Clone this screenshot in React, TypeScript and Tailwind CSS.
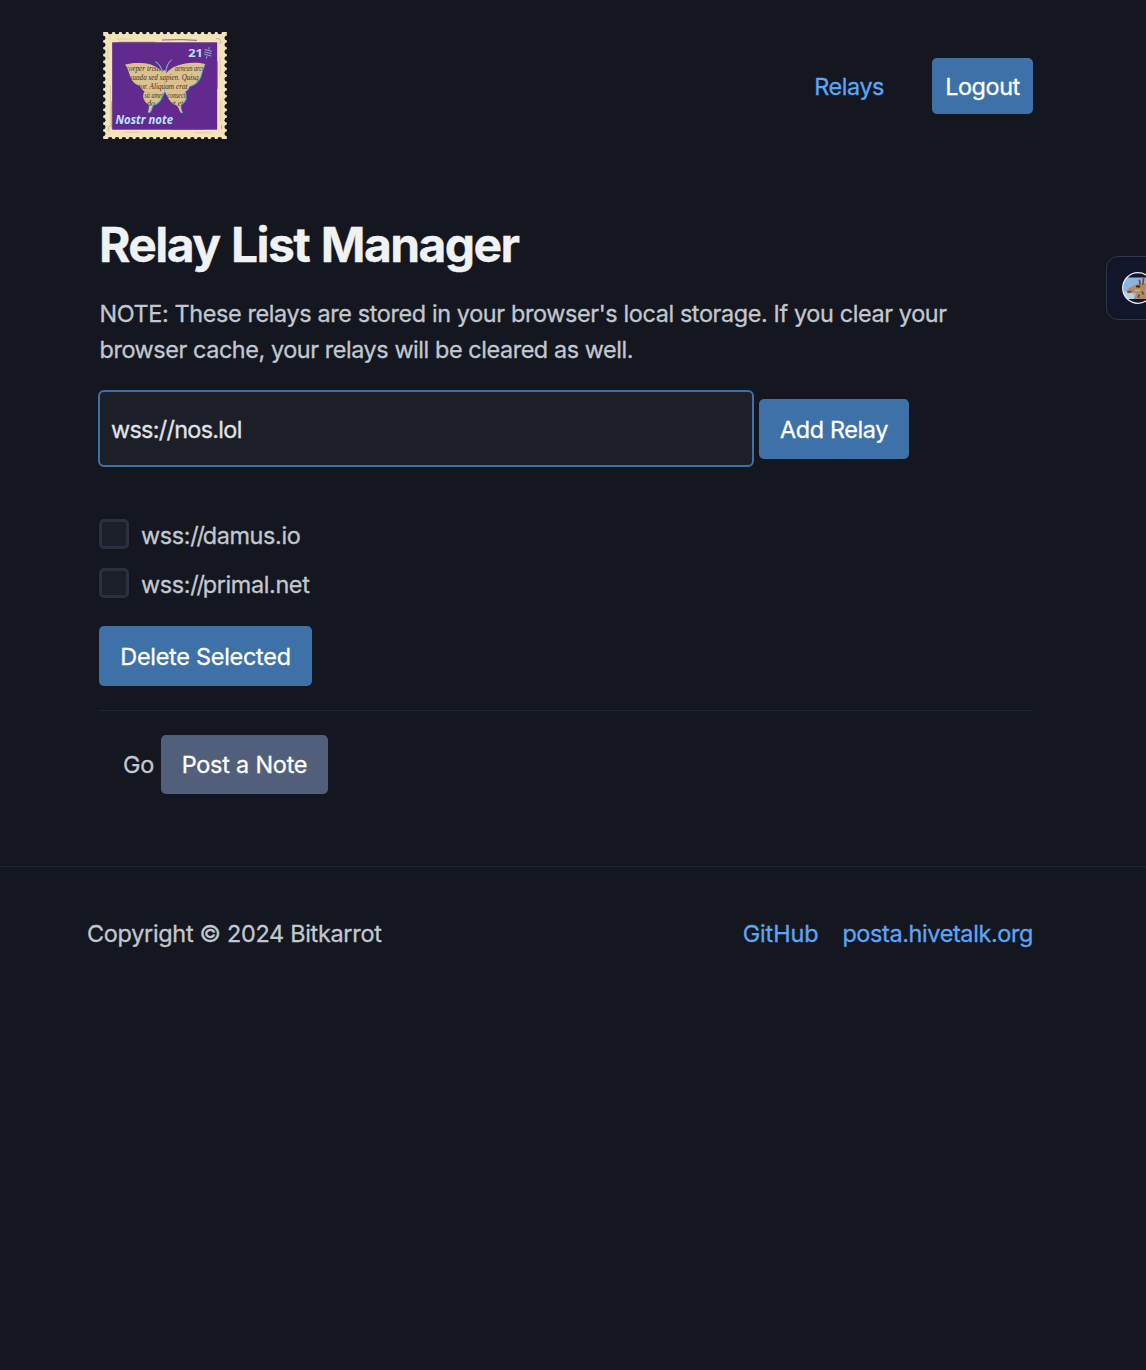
import { useState } from "react";

const teethX = Array.from({ length: 17 }, (_, i) => 45 + i * 20.6);
const teethY = Array.from({ length: 15 }, (_, i) => 38 + i * 20.6);

function ButterflyWing() {
  return (
    <path d="M206 146 C196 130 176 117 148 114 C126 112 104 113 90 118 C97 128 101 140 104 150 C109 167 119 177 134 181 C137 190 142 195 149 198 C143 205 143 217 147 224 C150 231 156 236 161 238 C163 246 161 254 158 262 C163 264 167 259 169 252 C171 246 172 242 175 239 C188 236 197 226 201 214 L209 198 L217 214 C222 226 232 236 243 239 C249 243 251 250 254 257 C256 262 259 264 262 262 C258 253 256 246 258 238 C267 232 272 226 273 218 C274 210 273 204 270 199 C278 195 281 190 283 183 C300 179 311 169 318 152 C321 140 324 129 330 116 C312 111 286 111 264 116 C242 121 222 130 213 146 Z" />
  );
}

function StampLogo() {
  return (
    <svg viewBox="24 20 372 325" className="block h-[108px] w-[124px] [-webkit-text-stroke:0]" role="img" aria-label="Nostr note stamp">
      <defs>
        <clipPath id="butterfly">
          <ButterflyWing />
        </clipPath>
      </defs>
      <rect x="24" y="20" width="372" height="322" fill="#f3e3b8" />
      {teethX.map((x) => (
        <g key={x} fill="#14171f">
          <circle cx={x} cy="20" r="7" />
          <circle cx={x} cy="343" r="7" />
        </g>
      ))}
      {teethY.map((y) => (
        <g key={y} fill="#14171f">
          <circle cx="24" cy={y} r="7" />
          <circle cx="396" cy={y} r="7" />
        </g>
      ))}
      <rect x="51" y="51" width="316" height="263" fill="#622a8e" />
      <g fill="none" stroke="#6d4a80" strokeLinecap="round">
        <path strokeWidth="1.2" opacity="0.4" d="M66 41 H110 M38 70 V100 M46 180 V296 M90 322 H130 M300 323 H348 M376 96 V150 M378 230 V290 M38 44 l6 -7" />
        <path strokeWidth="3" opacity="0.85" d="M202 44 L260 43 L305 45 M70 51 H180 M230 313 H330 M367 110 V190 M51 230 V310" />
        <path strokeWidth="2" opacity="0.5" d="M365 40 c10 -3 15 6 11 14 M40 318 c-4 -10 2 -16 8 -18 M380 300 v12" />
      </g>
      <g stroke="#3aa6c4" fill="none" strokeWidth="3" strokeLinecap="round">
        <path d="M203 141 C198 126 192 116 182 110" />
        <path d="M213 141 C214 124 220 112 230 104" />
      </g>
      <g fill="#37a5c6" transform="translate(2 2)">
        <ButterflyWing />
      </g>
      <g fill="#dbc28d">
        <ButterflyWing />
        <ellipse cx="208" cy="146" rx="6" ry="11" />
      </g>
      <g stroke="#c9b58d" fill="none" strokeWidth="2" strokeLinecap="round">
        <path d="M204 141 C199 126 193 116 183 110" />
        <path d="M212 141 C213 124 219 112 229 104" />
      </g>
      <g clipPath="url(#butterfly)" fill="#3f302c" fontFamily="'Liberation Serif', serif" fontStyle="italic" fontSize="24">
        <text x="92" y="138" textLength="105" lengthAdjust="spacingAndGlyphs">corper tristi</text>
        <text x="240" y="138" textLength="90" lengthAdjust="spacingAndGlyphs">aenean arcu</text>
        <text x="104" y="164" textLength="207" lengthAdjust="spacingAndGlyphs">suada sed sapien. Quisq</text>
        <text x="130" y="191" textLength="148" lengthAdjust="spacingAndGlyphs">tor. Aliquam erat</text>
        <text x="148" y="218" textLength="56" lengthAdjust="spacingAndGlyphs">sit amet</text>
        <text x="217" y="218" textLength="62" lengthAdjust="spacingAndGlyphs">consecte</text>
        <text x="156" y="243" textLength="110" lengthAdjust="spacingAndGlyphs">do uer  ut et</text>
      </g>
      <path d="M209 152 V200" stroke="#a98e62" strokeWidth="1.5" />
      <g fill="#b9e2fb" fontFamily="'Noto Sans', sans-serif" fontWeight="700">
        <text x="280" y="94" fontSize="33" textLength="44" lengthAdjust="spacingAndGlyphs">21</text>
        <text x="61" y="297" fontSize="35" fontStyle="italic" textLength="173" lengthAdjust="spacingAndGlyphs">Nostr note</text>
      </g>
      <g stroke="#a5cdea" strokeWidth="2.4" strokeLinecap="round">
        <path d="M331 73 L350 78 M330 80 L349 85 M329 87 L348 92 M343 67 L342 71 M336 94 L335 99" />
      </g>
    </svg>
  );
}

function GiraffeAvatar() {
  return (
    <svg viewBox="0 0 32 32" className="block h-8 w-8 shrink-0" role="img" aria-label="Giraffe">
      <defs>
        <clipPath id="avatar">
          <circle cx="16" cy="16" r="15" />
        </clipPath>
      </defs>
      <g clipPath="url(#avatar)">
        <rect width="32" height="32" fill="#12162a" />
        <rect y="5.5" width="32" height="21.5" fill="#8db4e0" />
        <path d="M0 19 L5 20 L12 22 V27 H0 Z" fill="#b9cfe2" />
        <path d="M4.5 18.5 L8 15.5 L12 13.5 L15 12 L18 11 L22 12 L24 15 L23 19 L24.5 27 H12 L14 23 L14 20.5 L10 20.8 L6.5 21.5 Z" fill="#b08a60" />
        <path d="M18 12 L17.5 8.5 M21 12 L21.5 6.5" stroke="#7d4b38" strokeWidth="1.8" strokeLinecap="round" />
        <path d="M22 13.5 L25 11.5" stroke="#a67a58" strokeWidth="2" strokeLinecap="round" />
        <path d="M15 14.5 h2.4" stroke="#2e241f" strokeWidth="2" strokeLinecap="round" />
        <path d="M5.8 20 L9 19.6 M17 23 l-.6 2 M20.5 20 l.7 2" stroke="#5b4434" strokeWidth="1.5" strokeLinecap="round" />
        <path d="M13 18.5 L18 18" stroke="#dcc39a" strokeWidth="1.2" fill="none" />
      </g>
      <circle cx="16" cy="16" r="15.3" fill="none" stroke="#eef0f5" strokeWidth="1.3" />
    </svg>
  );
}

function RelayOption({ host }: { host: string }) {
  const [checked, setChecked] = useState(false);
  return (
    <label className="flex h-[30px] items-center gap-3">
      <input
        type="checkbox"
        checked={checked}
        onChange={() => setChecked(!checked)}
        className="h-[30px] w-[30px] appearance-none rounded-[5px] border-3 border-[#2a3040] bg-[#1c1f28] checked:bg-[#3e71a8]"
      />
      <span className="mt-[3px] tracking-[-0.35px]">
        wss:<span className="tracking-[-2.2px]">//</span>{host}
      </span>
    </label>
  );
}

export default function App() {
  const [relay, setRelay] = useState("wss://nos.lol");
  return (
    <div className="relative min-h-[1370px] w-full overflow-hidden bg-[#14171f] font-['Inter',sans-serif] text-[23.4px] leading-9 font-[430] text-[#c2c7d0] [-webkit-text-stroke:0.3px_currentColor]">
      <header className="mx-[99px] flex h-[172px] w-[934px] items-center justify-between pl-1">
        <StampLogo />
        <nav className="flex items-center gap-12">
          <a href="#relays" className="pt-0.5 tracking-[-0.44px] text-[#5ca6f8]">Relays</a>
          <button className="h-14 w-[101px] rounded-[5px] bg-[#3e71a8] pt-0.5 tracking-[-0.4px] text-white">Logout</button>
        </nav>
      </header>

      <main className="mx-[99px] w-[934px] pt-[45px]">
        <h1 className="text-[48px] leading-[55px] font-bold tracking-[-1.6px] text-[#f0f1f3] [word-spacing:1.8px]">Relay List Manager</h1>
        <p className="mt-6 pl-[0.5px] whitespace-nowrap tracking-[-0.37px]">
          NOTE: These relays are stored in your browser's local storage. If you clear your
          <br />
          <span className="tracking-[-0.42px]">browser cache, your relays will be cleared as well.</span>
        </p>
        <div className="-ml-px mt-[22px] flex items-center gap-[5px]">
          <input
            value={relay}
            onChange={(e) => setRelay(e.target.value)}
            className="h-[77px] w-[656px] rounded-[6px] border-2 border-[#3e71a8] bg-[#1c1f27] px-[11px] pt-0.5 tracking-[-0.7px] text-[#e0e3e7] outline-none"
          />
          <button className="mt-px h-[60px] w-[150px] rounded-[5px] bg-[#3e71a8] pt-0.5 tracking-[-0.38px] text-white">Add Relay</button>
        </div>
        <div className="mt-[52px] flex flex-col gap-[19px]">
          <RelayOption host="damus.io" />
          <RelayOption host="primal.net" />
        </div>
        <button className="mt-7 block h-[60px] w-[213px] rounded-[5px] bg-[#3e71a8] pt-0.5 tracking-[-0.25px] text-white">Delete Selected</button>
        <hr className="mt-6 border-t border-[#202632]" />
        <div className="mt-6 flex items-center pl-6">
          <span className="w-[38px] tracking-[-0.2px]">Go</span>
          <button className="h-[59px] w-[167px] rounded-[5px] bg-[#525f7a] tracking-[-0.2px] text-white">Post a Note</button>
        </div>
      </main>

      <footer className="mt-[72px] border-t border-[#202632] pt-[49px]">
        <div className="mr-[113px] ml-[87px] flex h-9 items-center justify-between">
          <span className="tracking-[-0.28px]">Copyright © 2024 Bitkarrot</span>
          <div className="flex gap-6 text-[#5ca6f8]">
            <a href="#github" className="tracking-[-0.1px]">GitHub</a>
            <a href="#posta" className="tracking-[-0.36px]">posta.hivetalk.org</a>
          </div>
        </div>
      </footer>

      <aside className="absolute top-64 -right-3 flex h-16 w-[52px] items-center rounded-l-[12px] border border-[#323545] bg-[#12162a] pl-[15px]">
        <GiraffeAvatar />
      </aside>
    </div>
  );
}
